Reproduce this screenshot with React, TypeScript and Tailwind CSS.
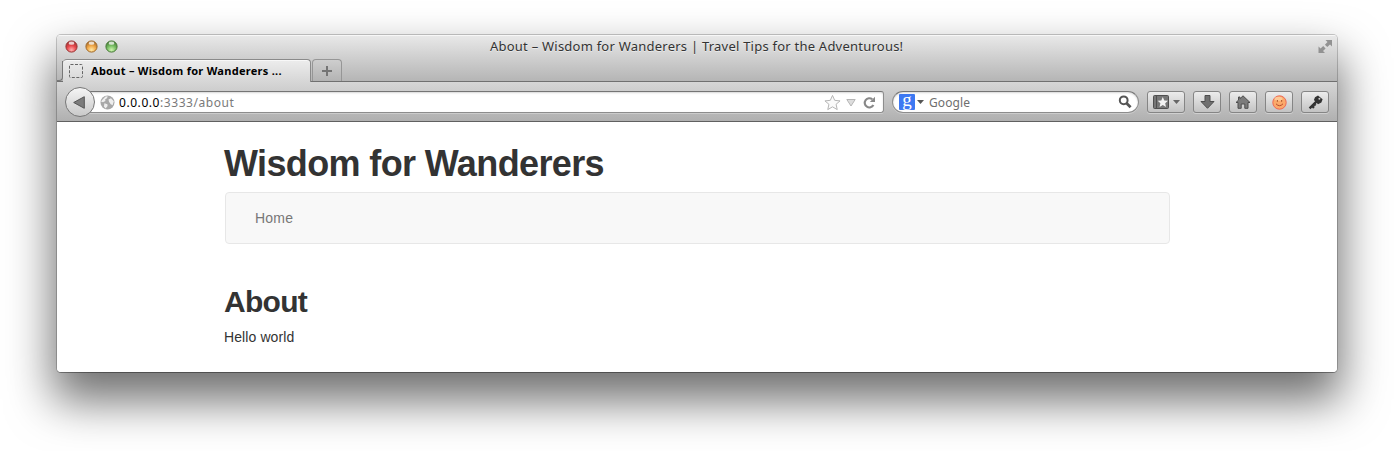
import React from "react";

const toolbarButton =
  "flex h-[22px] items-center justify-center rounded-[3px] border border-[#858585] bg-linear-to-b from-[#ececec] to-[#c3c3c3] shadow-[0_1px_0_rgba(255,255,255,0.35)]";

function Light({ id, dark, mid, glow }: { id: string; dark: string; mid: string; glow: string }) {
  return (
    <svg className="size-[13px]" viewBox="0 0 13 13">
      <defs>
        <radialGradient id={id} cx="50%" cy="82%" r="75%">
          <stop offset="0" stopColor={glow} />
          <stop offset="0.55" stopColor={mid} />
          <stop offset="1" stopColor={dark} />
        </radialGradient>
      </defs>
      <circle cx="6.5" cy="6.5" r="5.6" fill={`url(#${id})`} stroke={dark} strokeWidth="1" />
      <ellipse cx="6.5" cy="3.2" rx="2.9" ry="1.6" fill="#fff" opacity="0.75" />
    </svg>
  );
}

function TitleBar() {
  return (
    <div className="grid h-6 grid-cols-[1fr_auto_1fr] items-center px-[4px] pb-[2px]">
      <div className="ml-[3.5px] flex gap-[7px]">
        <Light id="close" dark="#9a3434" mid="#e8474b" glow="#ffb0b0" />
        <Light id="minimise" dark="#a06a2c" mid="#f0a545" glow="#ffeaa8" />
        <Light id="maximise" dark="#487a38" mid="#76bd62" glow="#d0f5b0" />
      </div>
      <h2 className="w-[414px] text-[13px] leading-[20px] tracking-[0.23px] whitespace-nowrap text-[#333] [text-shadow:0_1px_0_rgba(255,255,255,0.5)]">
        About – Wisdom for Wanderers | Travel Tips for the Adventurous!
      </h2>
      <svg className="size-[15px] justify-self-end" viewBox="0 0 15 15" fill="#929292">
        <path d="M7.5 1H14V7.5L12 5.5L9.3 8.1L6.9 5.7L9.5 3Z" />
        <path d="M.5 7.5V14H7L5 12L7.6 9.4L5.2 7L2.6 9.5Z" />
      </svg>
    </div>
  );
}

function TabStrip() {
  return (
    <div className="flex h-[22px] items-end">
      <div className="h-[20px] w-[6px] rounded-br-[4px] border-r border-b border-[#777]" />
      <div className="z-10 -mb-px flex h-[23px] w-[248px] items-center rounded-t-[4px] border-t border-r border-[#8a8a8a] bg-linear-to-b from-[#ededed] to-[#d6d6d6] pl-[6px] shadow-[inset_0_1px_0_#f8f8f8]">
        <svg className="size-[14px]" viewBox="0 0 14 14" fill="none" stroke="#666">
          <rect x=".5" y=".5" width="13" height="13" rx="1" strokeDasharray="3 1.5" />
        </svg>
        <span className="ml-[8px] text-[11px] leading-[20px] font-bold tracking-[0.28px] whitespace-nowrap text-black">
          About – Wisdom for Wanderers ...
        </span>
      </div>
      <div className="ml-px flex h-[22px] w-[30px] items-center justify-center rounded-t-[4px] border border-b-0 border-[#969696] bg-linear-to-b from-[#cecece] to-[#b3b3b3]">
        <svg className="size-[10px]" viewBox="0 0 10 10" stroke="#747474" strokeWidth="2">
          <path d="M5 0V10M0 5H10" />
        </svg>
      </div>
    </div>
  );
}

function AddressBar() {
  return (
    <div className="flex min-w-0 flex-1 items-center">
      <button className="z-10 flex size-[30px] shrink-0 items-center justify-center rounded-full border border-[#777] bg-linear-to-b from-[#f5f5f5] to-[#c9c9c9]">
        <svg className="mr-[3px] h-[13px] w-[12px]" viewBox="0 0 12 13">
          <path d="M.7 6.5L11.3.7V12.3Z" fill="#7c7c7c" stroke="#555" />
        </svg>
      </button>
      <div className="-ml-[8px] flex h-[22px] flex-1 items-center rounded-r-[3px] border border-[#8d8d8d] border-t-[#757575] bg-white pr-[7px] pl-[12px] shadow-[inset_0_1px_2px_rgba(0,0,0,0.16),0_1px_0_rgba(255,255,255,0.3)]">
        <svg className="size-[15px]" viewBox="0 0 15 15">
          <circle cx="7.5" cy="7.5" r="7" fill="#a8a8a8" />
          <path d="M2.2 5L5.5 1.6L7.7 1.2L7 3.3L5.2 4.2L5.4 6L3 7.2L1 6.6Z M8.5 4.4L11 3.3L13.8 6.2L12.6 10.2L10.7 9.3L9 6.8Z M4.4 8.3L7.4 9.2L7.6 11L5.6 13.6L3.9 11.6Z" fill="#eee" />
        </svg>
        <span className="ml-[4px] pt-[2px] text-[12px] leading-[20px] tracking-[0.56px] text-[#7a7a7a]">
          <span className="text-black">0.0.0.0</span>:3333/about
        </span>
        <svg className="mr-px ml-auto h-[17px] w-[17px]" viewBox="0 0 18 17" fill="#fafafa" stroke="#b0b0b0">
          <path d="M9 1L11.3 6.2L17 6.8L12.8 10.4L14 16L9 13.1L4 16L5.2 10.4L1 6.8L6.7 6.2Z" />
        </svg>
        <svg className="mt-px mr-px ml-[4px] h-[8px] w-[10px]" viewBox="0 0 10 8">
          <path d="M.8.5H9.2L5 7Z" fill="#ddd" stroke="#b5b5b5" />
        </svg>
        <svg className="ml-[6px] size-[13px]" viewBox="0 0 13 13">
          <path d="M10.4 9A4.6 4.6 0 1 1 9.3 3.3" fill="none" stroke="#888" strokeWidth="2.1" />
          <path d="M12 .8V6H6.8Z" fill="#888" />
        </svg>
      </div>
    </div>
  );
}

function SearchBox() {
  return (
    <div className="ml-[8px] flex h-[22px] w-[247px] items-center rounded-full border border-[#8d8d8d] border-t-[#757575] bg-white pr-[6px] pl-[6px] shadow-[inset_0_1px_2px_rgba(0,0,0,0.16),0_1px_0_rgba(255,255,255,0.3)]">
      <span className="flex size-[16px] items-center justify-center rounded-[1px] bg-[#3d78f2] pb-[6px] font-['Liberation_Serif',serif] text-[19px] leading-none text-white">
        g
      </span>
      <svg className="ml-[2px] h-[4px] w-[7px]" viewBox="0 0 7 4" fill="#555">
        <path d="M0 0H7L3.5 4Z" />
      </svg>
      <span className="ml-[5px] pt-[2px] text-[12px] leading-[20px] tracking-[0.1px] text-[#6e6e6e]">Google</span>
      <svg className="ml-auto size-[14px]" viewBox="0 0 14 14" fill="none" stroke="#555">
        <circle cx="5.7" cy="5.3" r="3.9" strokeWidth="2" />
        <path d="M8.6 8.2L12.6 12.2" strokeWidth="2.7" />
      </svg>
    </div>
  );
}

function Toolbar() {
  return (
    <div className="flex h-[41px] items-center border-t border-[#707070] border-b border-b-[#606060] bg-linear-to-b from-[#d6d6d6] to-[#b0b0b0] px-[8px] pt-px">
      <AddressBar />
      <SearchBox />
      <div className="ml-[8px] flex gap-[8px]">
        <button className={`${toolbarButton} w-[38px]`}>
          <svg className="h-[14px] w-[16px]" viewBox="0 0 16 14">
            <rect x=".5" y=".5" width="15" height="13" rx="1" fill="#777" stroke="#505050" />
            <path d="M3.5 1V13" stroke="#505050" />
            <path d="M9.8 2L11.3 5.4L15 5.8L12.2 8.2L13 12L9.8 10L6.6 12L7.4 8.2L4.7 5.8L8.3 5.4Z" fill="#f4f4f4" />
          </svg>
          <svg className="ml-[4px] h-[4px] w-[7px]" viewBox="0 0 7 4" fill="#666">
            <path d="M0 0H7L3.5 4Z" />
          </svg>
        </button>
        <button className={`${toolbarButton} w-[28px]`}>
          <svg className="h-[14px] w-[15px]" viewBox="0 0 15 14" fill="#707070" stroke="#4e4e4e">
            <path d="M5 .5H10V6.5H14L7.5 13.3L1 6.5H5Z" />
          </svg>
        </button>
        <button className={`${toolbarButton} w-[28px]`}>
          <svg className="h-[14px] w-[16px]" viewBox="0 0 16 14" fill="#7b7b7b" stroke="#4e4e4e">
            <path d="M8 .8L15 7.5H13V13.3H9.8V9H6.2V13.3H3V7.5H1L3.5 5.1V2H5V3.7Z" />
          </svg>
        </button>
        <button className={`${toolbarButton} w-[28px]`}>
          <svg className="size-[15px]" viewBox="0 0 15 15">
            <circle cx="7.5" cy="7.5" r="6.7" fill="#fba96a" stroke="#ee6855" />
            <ellipse cx="6.5" cy="3.8" rx="4" ry="2" fill="#ffdfb5" opacity=".6" />
            <path d="M5.4 5V6.8M9.6 5V6.8" stroke="#b05a30" strokeWidth="1.1" />
            <path d="M4 8.8Q7.5 12.6 11 8.8" fill="none" stroke="#b44b2d" strokeWidth="1" />
          </svg>
        </button>
        <button className={`${toolbarButton} w-[28px]`}>
          <svg className="size-[15px]" viewBox="0 0 15 15">
            <path d="M8.4 6.6L1.6 13.4M3.6 10.5L6 12.8M5.6 8.6L7.6 10.5" stroke="#333" strokeWidth="2.4" />
            <path d="M7 2.2L10 .5L14.6 4.3L13.4 7.4L10 9.2L5.9 5.1Z" fill="#333" />
            <circle cx="11.4" cy="3.7" r="1" fill="#ccc" />
          </svg>
        </button>
      </div>
    </div>
  );
}

function Page() {
  return (
    <main className="flex-1 bg-white px-[167px] pt-[21px] font-['Liberation_Sans',Arial,sans-serif] text-[14px] leading-[20px] text-[#333]">
      <h1 className="h-[39px] text-[36px] leading-[42px] font-bold tracking-[-0.62px] whitespace-nowrap">
        Wisdom for Wanderers
      </h1>
      <nav className="mt-[10px] ml-[1px] flex h-[52px] items-center rounded-[4px] border border-[#e7e7e7] bg-[#f8f8f8] pl-[29px] text-[#777]">
        <a href="#home" className="tracking-[0.2px]">Home</a>
      </nav>
      <h2 className="mt-[41px] text-[30px] leading-[34px] font-bold tracking-[-0.7px]">About</h2>
      <p className="mt-[8px] tracking-[0.1px]">Hello world</p>
    </main>
  );
}

export default function App() {
  return (
    <div className="h-[451px] w-[1394px] overflow-hidden bg-white px-[57px] pt-[35px] font-['Noto_Sans',sans-serif]">
      <div className="flex h-[337px] flex-col overflow-hidden rounded-[4px] shadow-[0_0_0_1px_rgba(0,0,0,0.2),0_1px_0_rgba(0,0,0,0.2),0_25px_46px_4px_rgba(0,0,0,0.56)]">
        <div className="bg-linear-to-b from-[#e9e9e9] to-[#b5b5b5] shadow-[inset_0_1px_0_#f7f7f7]">
          <TitleBar />
          <TabStrip />
        </div>
        <Toolbar />
        <Page />
      </div>
    </div>
  );
}
